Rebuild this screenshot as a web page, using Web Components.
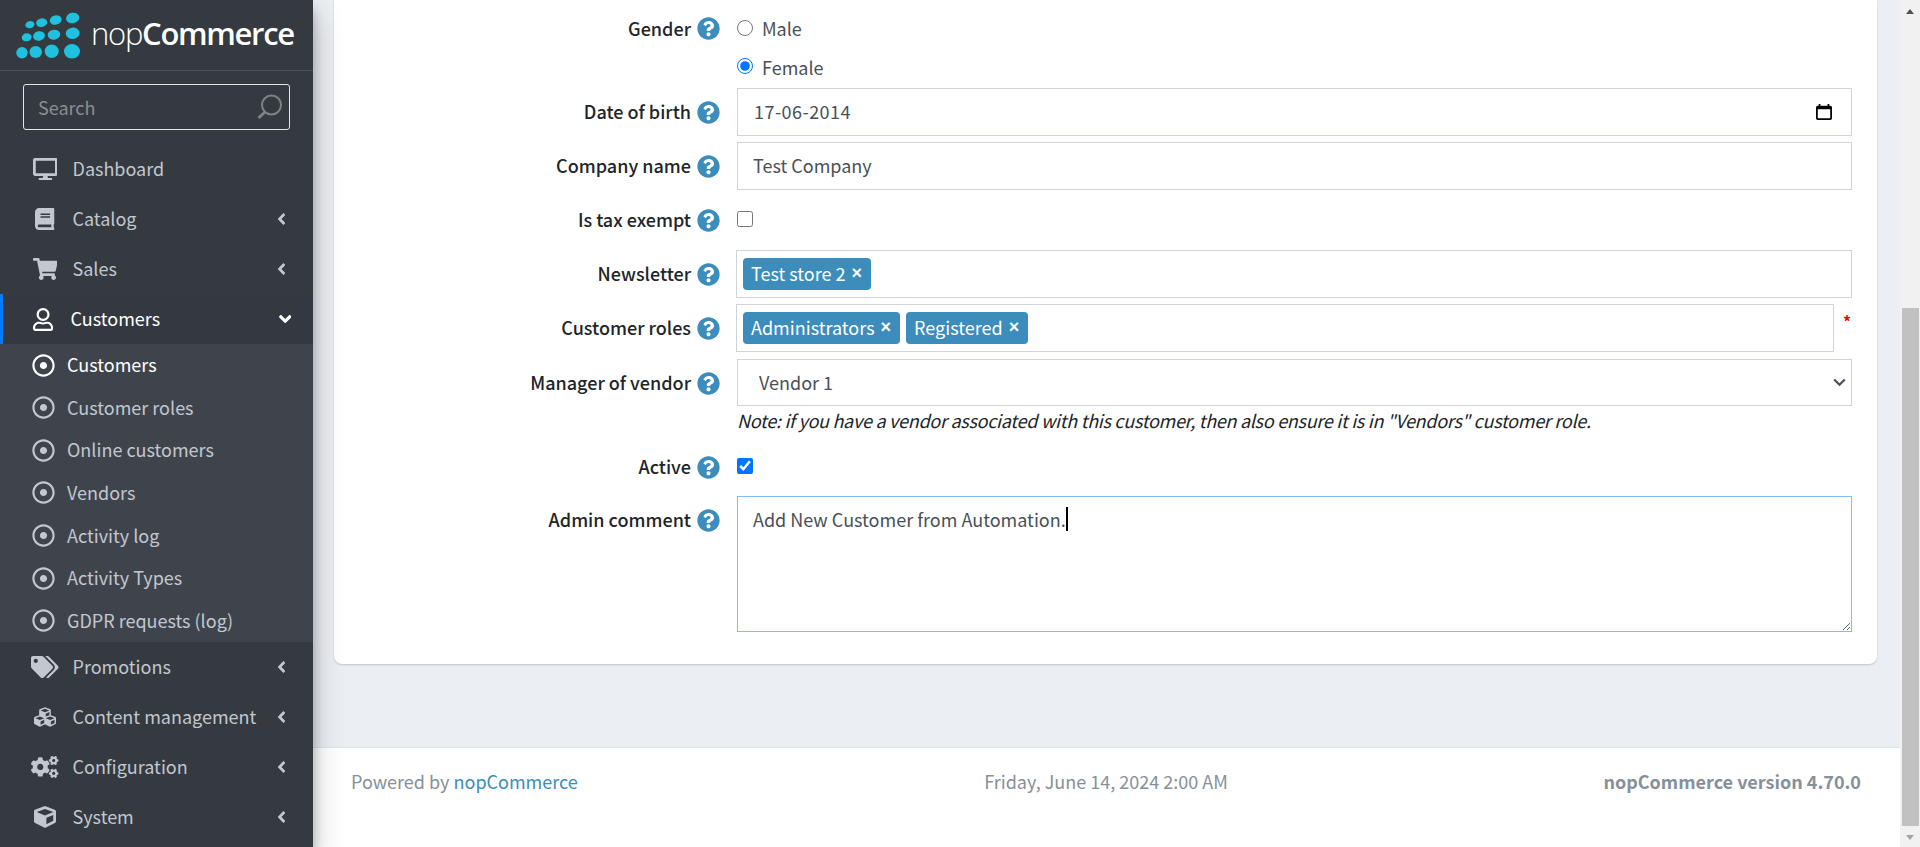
<!DOCTYPE html>
<html lang="en">
<head>
<meta charset="utf-8">
<title>nopCommerce</title>
<style>
  html, body { margin: 0; height: 100%; overflow: hidden; }
  body { font-family: "Noto Sans CJK SC", "Noto Sans", sans-serif; }
</style>
</head>
<body>
<nop-app>
  <nop-sidebar slot="side">
    <nop-menu-item icon="desktop">Dashboard</nop-menu-item>
    <nop-menu-item icon="book" arrow>Catalog</nop-menu-item>
    <nop-menu-item icon="cart" arrow>Sales</nop-menu-item>
    <nop-menu-item icon="user" open>Customers</nop-menu-item>
    <nop-submenu>
      <nop-subitem active>Customers</nop-subitem>
      <nop-subitem>Customer roles</nop-subitem>
      <nop-subitem>Online customers</nop-subitem>
      <nop-subitem>Vendors</nop-subitem>
      <nop-subitem>Activity log</nop-subitem>
      <nop-subitem>Activity Types</nop-subitem>
      <nop-subitem>GDPR requests (log)</nop-subitem>
    </nop-submenu>
    <nop-menu-item icon="tags" arrow>Promotions</nop-menu-item>
    <nop-menu-item icon="cubes" arrow>Content management</nop-menu-item>
    <nop-menu-item icon="cogs" arrow>Configuration</nop-menu-item>
    <nop-menu-item icon="cube" arrow>System</nop-menu-item>
  </nop-sidebar>

  <nop-card>
    <nop-row label="Gender" style="--label-h:39px;--gap:1px">
      <nop-choice type="radio" name="gender">Male</nop-choice>
      <nop-choice type="radio" name="gender" checked style="--nudge:-2px">Female</nop-choice>
    </nop-row>
    <nop-row label="Date of birth"><nop-field calendar style="--track:.45px">17-06-2014</nop-field></nop-row>
    <nop-row label="Company name"><nop-field style="--pad:15px">Test Company</nop-field></nop-row>
    <nop-row label="Is tax exempt"><nop-choice type="checkbox" style="--h:48px"></nop-choice></nop-row>
    <nop-row label="Newsletter">
      <nop-tags><nop-tag>Test store 2</nop-tag></nop-tags>
    </nop-row>
    <nop-row label="Customer roles" style="--gap:7px">
      <nop-tags required><nop-tag>Administrators</nop-tag><nop-tag>Registered</nop-tag></nop-tags>
    </nop-row>
    <nop-row label="Manager of vendor">
      <nop-field select style="--field-h:47px;--pad:21px">Vendor 1</nop-field>
      <nop-note>Note: if you have a vendor associated with this customer, then also ensure it is in "Vendors" customer role.</nop-note>
    </nop-row>
    <nop-row label="Active" style="--label-h:46px"><nop-choice type="checkbox" checked style="--h:46px"></nop-choice></nop-row>
    <nop-row label="Admin comment" style="--gap:0px"><nop-textarea>Add New Customer from Automation.</nop-textarea></nop-row>
  </nop-card>

  <nop-footer slot="footer"></nop-footer>
  <nop-scrollbar slot="bar"></nop-scrollbar>
</nop-app>

<script>
const ICONS = {
  desktop: ['0 0 576 512', 'M528 0H48C21.5 0 0 21.5 0 48v320c0 26.5 21.5 48 48 48h192l-16 48h-72c-13.3 0-24 10.7-24 24s10.7 24 24 24h272c13.3 0 24-10.7 24-24s-10.7-24-24-24h-72l-16-48h192c26.5 0 48-21.5 48-48V48c0-26.5-21.5-48-48-48zm-16 352H64V64h448v288z'],
  book: ['0 0 448 512', 'M448 360V24c0-13.3-10.7-24-24-24H96C43 0 0 43 0 96v320c0 53 43 96 96 96h328c13.3 0 24-10.7 24-24v-16c0-7.5-3.5-14.3-8.9-18.7-4.2-15.4-4.2-59.3 0-74.7 5.4-4.3 8.9-11.1 8.9-18.6zM128 134c0-3.3 2.7-6 6-6h212c3.3 0 6 2.7 6 6v20c0 3.3-2.7 6-6 6H134c-3.3 0-6-2.7-6-6v-20zm0 64c0-3.3 2.7-6 6-6h212c3.3 0 6 2.7 6 6v20c0 3.3-2.7 6-6 6H134c-3.3 0-6-2.7-6-6v-20zm253.4 250H96c-17.7 0-32-14.3-32-32 0-17.6 14.4-32 32-32h285.4c-1.9 17.1-1.9 46.9 0 64z'],
  cart: ['0 0 576 512', 'M528.12 301.319l47.273-208C578.806 78.301 567.391 64 551.99 64H159.208l-9.166-44.81C147.758 8.021 137.93 0 126.529 0H24C10.745 0 0 10.745 0 24v16c0 13.255 10.745 24 24 24h69.883l70.248 343.435C147.325 417.1 136 435.222 136 456c0 30.928 25.072 56 56 56s56-25.072 56-56c0-15.674-6.447-29.835-16.824-40h209.647C430.447 426.165 424 440.326 424 456c0 30.928 25.072 56 56 56s56-25.072 56-56c0-22.172-12.888-41.332-31.579-50.405l5.517-24.276c3.413-15.018-8.002-29.319-23.403-29.319H218.117l-6.545-32h293.145c11.206 0 20.92-7.754 23.403-18.681z'],
  user: ['0 0 448 512', 'M313.6 304c-28.7 0-42.5 16-89.6 16-47.1 0-60.8-16-89.6-16C60.2 304 0 364.2 0 438.4V464c0 26.5 21.5 48 48 48h352c26.5 0 48-21.5 48-48v-25.6c0-74.2-60.2-134.4-134.4-134.4zM400 464H48v-25.6c0-47.6 38.8-86.4 86.4-86.4 14.6 0 38.3 16 89.6 16 51.7 0 74.9-16 89.6-16 47.6 0 86.4 38.8 86.4 86.4V464zM224 288c79.5 0 144-64.5 144-144S303.5 0 224 0 80 64.5 80 144s64.5 144 144 144zm0-240c52.9 0 96 43.1 96 96s-43.1 96-96 96-96-43.1-96-96 43.1-96 96-96z'],
  tags: ['0 0 640 512', 'M497.941 225.941L286.059 14.059A48 48 0 0 0 252.118 0H48C21.49 0 0 21.49 0 48v204.118a48 48 0 0 0 14.059 33.941l211.882 211.882c18.744 18.745 49.136 18.746 67.882 0l204.118-204.118c18.745-18.745 18.745-49.137 0-67.882zM112 160c-26.51 0-48-21.49-48-48s21.49-48 48-48 48 21.49 48 48-21.49 48-48 48zm513.941 133.823L421.823 497.941c-18.745 18.745-49.137 18.745-67.882 0l-.36-.36L527.64 323.522c16.999-16.999 26.36-39.6 26.36-63.64s-9.362-46.641-26.36-63.64L331.397 0h48.721a48 48 0 0 1 33.941 14.059l211.882 211.882c18.745 18.745 18.745 49.137 0 67.882z'],
  cubes: ['0 0 512 512', 'M488.6 250.2L392 214V105.5c0-15-9.3-28.4-23.4-33.7l-100-37.5c-8.1-3.1-17.1-3.1-25.3 0l-100 37.5c-14.1 5.3-23.4 18.7-23.4 33.7V214l-96.6 36.2C9.3 255.5 0 268.9 0 283.9V394c0 13.6 7.7 26.1 19.9 32.2l100 50c10.1 5.1 22.1 5.1 32.2 0l103.9-52 103.9 52c10.1 5.1 22.1 5.1 32.2 0l100-50c12.2-6.1 19.9-18.6 19.9-32.2V283.9c0-15-9.3-28.4-23.4-33.7zM358 214.8l-85 31.9v-68.2l85-37v73.3zM154 104.1l102-38.2 102 38.2v.6l-102 41.4-102-41.4v-.6zm84 291.1l-85 42.5v-79.1l85-38.8v75.4zm0-112l-102 41.4-102-41.4v-.6l102-38.2 102 38.2v.6zm240 112l-85 42.5v-79.1l85-38.8v75.4zm0-112l-102 41.4-102-41.4v-.6l102-38.2 102 38.2v.6z'],
  cogs: ['0 0 640 512', 'M512.1 191l-8.2 14.3c-3 5.3-9.4 7.5-15.1 5.4-11.8-4.4-22.6-10.7-32.1-18.6-4.6-3.8-5.8-10.5-2.8-15.7l8.2-14.3c-6.9-8-12.3-17.3-15.9-27.4h-16.5c-6 0-11.2-4.3-12.2-10.3-2-12-2.1-24.6 0-37.1 1-6 6.2-10.4 12.2-10.4h16.5c3.6-10.1 9-19.4 15.9-27.4l-8.2-14.3c-3-5.2-1.9-11.9 2.8-15.7 9.5-7.9 20.4-14.2 32.1-18.6 5.7-2.1 12.1.1 15.1 5.4l8.2 14.3c10.5-1.9 21.2-1.9 31.7 0L552 6.3c3-5.3 9.4-7.5 15.1-5.4 11.8 4.4 22.6 10.7 32.1 18.6 4.6 3.8 5.8 10.5 2.8 15.7l-8.2 14.3c6.9 8 12.3 17.3 15.9 27.4h16.5c6 0 11.2 4.3 12.2 10.3 2 12 2.1 24.6 0 37.1-1 6-6.2 10.4-12.2 10.4h-16.5c-3.6 10.1-9 19.4-15.9 27.4l8.2 14.3c3 5.2 1.9 11.9-2.8 15.7-9.5 7.9-20.4 14.2-32.1 18.6-5.7 2.1-12.1-.1-15.1-5.4l-8.2-14.3c-10.4 1.9-21.2 1.9-31.7 0zm-10.5-58.8c38.5 29.6 82.4-14.3 52.8-52.8-38.5-29.7-82.4 14.3-52.8 52.8zM386.3 286.1l33.7 16.8c10.1 5.8 14.5 18.1 10.5 29.1-8.9 24.2-26.4 46.4-42.6 65.8-7.4 8.9-20.2 11.1-30.3 5.3l-29.1-16.8c-16 13.7-34.6 24.6-54.9 31.7v33.6c0 11.6-8.3 21.6-19.7 23.6-24.6 4.2-50.4 4.4-75.9 0-11.5-2-20-11.9-20-23.6V418c-20.3-7.2-38.9-18-54.9-31.7L74 403c-10 5.8-22.9 3.6-30.3-5.3-16.2-19.4-33.3-41.6-42.2-65.7-4-10.9.4-23.2 10.5-29.1l33.3-16.8c-3.9-20.9-3.9-42.4 0-63.4L12 205.8c-10.1-5.8-14.6-18.1-10.5-29 8.9-24.2 26-46.4 42.2-65.8 7.4-8.9 20.2-11.1 30.3-5.3l29.1 16.8c16-13.7 34.6-24.6 54.9-31.7V57.1c0-11.5 8.2-21.5 19.6-23.5 24.6-4.2 50.5-4.4 76-.1 11.5 2 20 11.9 20 23.6v33.6c20.3 7.2 38.9 18 54.9 31.7l29.1-16.8c10-5.8 22.9-3.6 30.3 5.3 16.2 19.4 33.2 41.6 42.1 65.8 4 10.9.1 23.2-10 29.1l-33.7 16.8c3.9 21 3.9 42.5 0 63.5zm-117.6 21.1c59.2-77-28.7-164.9-105.7-105.7-59.2 77 28.7 164.9 105.7 105.7zm243.4 182.7l-8.2 14.3c-3 5.3-9.4 7.5-15.1 5.4-11.8-4.4-22.6-10.7-32.1-18.6-4.6-3.8-5.8-10.5-2.8-15.7l8.2-14.3c-6.9-8-12.3-17.3-15.9-27.4h-16.5c-6 0-11.2-4.3-12.2-10.3-2-12-2.1-24.6 0-37.1 1-6 6.2-10.4 12.2-10.4h16.5c3.6-10.1 9-19.4 15.9-27.4l-8.2-14.3c-3-5.2-1.9-11.9 2.8-15.7 9.5-7.9 20.4-14.2 32.1-18.6 5.7-2.1 12.1.1 15.1 5.4l8.2 14.3c10.5-1.9 21.2-1.9 31.7 0l8.2-14.3c3-5.3 9.4-7.5 15.1-5.4 11.8 4.4 22.6 10.7 32.1 18.6 4.6 3.8 5.8 10.5 2.8 15.7l-8.2 14.3c6.9 8 12.3 17.3 15.9 27.4h16.5c6 0 11.2 4.3 12.2 10.3 2 12 2.1 24.6 0 37.1-1 6-6.2 10.4-12.2 10.4h-16.5c-3.6 10.1-9 19.4-15.9 27.4l8.2 14.3c3 5.2 1.9 11.9-2.8 15.7-9.5 7.9-20.4 14.2-32.1 18.6-5.7 2.1-12.1-.1-15.1-5.4l-8.2-14.3c-10.4 1.9-21.2 1.9-31.7 0zM501.6 431c38.5 29.6 82.4-14.3 52.8-52.8-38.5-29.6-82.4 14.3-52.8 52.8z'],
  cube: ['0 0 512 512', 'M239.1 6.3l-208 78c-18.7 7-31.1 25-31.1 45v225.1c0 18.2 10.3 34.8 26.5 42.9l208 104c13.5 6.8 29.4 6.8 42.9 0l208-104c16.3-8.1 26.5-24.8 26.5-42.9V129.3c0-20-12.4-37.9-31.1-44.9l-208-78C262 2.2 250 2.2 239.1 6.3zM256 68.4l192 72v1.1l-192 78-192-78v-1.1l192-72zm32 356V275.5l160-65v133.9l-160 80z'],
  help: ['0 0 512 512', 'M504 256c0 136.997-111.043 248-248 248S8 392.997 8 256C8 119.083 119.043 8 256 8s248 111.083 248 248zM262.655 90c-54.497 0-89.255 22.957-116.549 63.758-3.536 5.286-2.353 12.415 2.715 16.258l34.699 26.31c5.205 3.947 12.621 3.008 16.665-2.122 17.864-22.658 30.113-35.797 57.303-35.797 20.429 0 45.698 13.148 45.698 32.958 0 14.976-12.363 22.667-32.534 33.976C247.128 238.528 216 254.941 216 296v4c0 6.627 5.373 12 12 12h56c6.627 0 12-5.373 12-12v-1.333c0-28.462 83.186-29.647 83.186-106.667 0-58.002-60.165-102-116.531-102zM256 338c-25.365 0-46 20.635-46 46 0 25.364 20.635 46 46 46s46-20.636 46-46c0-25.365-20.635-46-46-46z'],
  dot: ['0 0 512 512', 'M256 56c110.532 0 200 89.451 200 200 0 110.532-89.451 200-200 200-110.532 0-200-89.451-200-200 0-110.532 89.451-200 200-200m0-48C119.033 8 8 119.033 8 256s111.033 248 248 248 248-111.033 248-248S392.967 8 256 8zm0 168c-44.183 0-80 35.817-80 80s35.817 80 80 80 80-35.817 80-80-35.817-80-80-80z'],
  left: ['0 0 256 512', 'M31.7 239l136-136c9.4-9.4 24.6-9.4 33.9 0l22.6 22.6c9.4 9.4 9.4 24.6 0 33.9L127.9 256l96.4 96.4c9.4 9.4 9.4 24.6 0 33.9L201.7 409c-9.4 9.4-24.6 9.4-33.9 0l-136-136c-9.5-9.4-9.5-24.6-.1-34z'],
  down: ['0 0 320 512', 'M143 352.3L7 216.3c-9.4-9.4-9.4-24.6 0-33.9l22.6-22.6c9.4-9.4 24.6-9.4 33.9 0l96.4 96.4 96.4-96.4c9.4-9.4 24.6-9.4 33.9 0l22.6 22.6c9.4 9.4 9.4 24.6 0 33.9l-136 136c-9.2 9.4-24.4 9.4-33.8 0z']
};
const icon = (name, h) => `<svg viewBox="${ICONS[name][0]}" height="${h}" fill="currentColor"><path d="${ICONS[name][1]}"/></svg>`;

// small helper, every element is just a template in an open shadow root
const define = (tag, html) => {
  customElements.define(tag, class extends HTMLElement {
    constructor() {
      super();
      this.attachShadow({ mode: 'open' });
      this.shadowRoot.innerHTML = typeof html === 'function' ? html(this) : html;
    }
  });
};

define('nop-app', `
<style>
  :host { display: flex; width: 1920px; height: 847px; overflow: hidden; background: #ebeef3; }
  .side { display: block; flex: 0 0 313px; position: relative; z-index: 2; box-shadow: 0 14px 28px rgba(0,0,0,.25), 0 10px 10px rgba(0,0,0,.22); }
  main { flex: 1; display: flex; flex-direction: column; min-width: 0; }
  .content { flex: 1; padding: 0 23px 0 21px; }
</style>
<div class="side"><slot name="side"></slot></div>
<main>
  <div class="content"><slot></slot></div>
  <slot name="footer"></slot>
</main>
<slot name="bar"></slot>`);

define('nop-logo', `
<style>
  :host { display: flex; align-items: center; height: 70px; border-bottom: 1px solid #4b545c; }
  svg { flex: none; margin-left: 16px; }
  .t { margin-left: 9px; margin-top: -5px; color: #fff; font: 300 31px/40px "Open Sans", sans-serif; letter-spacing: -1.3px; white-space: nowrap; }
  b { font-weight: 600; }
</style>
<svg width="66" height="50" viewBox="16 10 66 50" fill="#1fc1de">
  <g transform="rotate(-12 30 25)"><ellipse cx="30" cy="24.7" rx="4.6" ry="3.6"/></g>
  <g transform="rotate(-12 41.7 22.7)"><ellipse cx="41.7" cy="22.7" rx="5.6" ry="4.3"/></g>
  <g transform="rotate(-12 55.7 20)"><ellipse cx="55.7" cy="20" rx="6" ry="4.7"/></g>
  <g transform="rotate(-10 72.7 18)"><ellipse cx="72.7" cy="18" rx="6.7" ry="5.3"/></g>
  <g transform="rotate(-10 26.7 37.3)"><ellipse cx="26.7" cy="37.3" rx="5" ry="4"/></g>
  <g transform="rotate(-10 39 36)"><ellipse cx="39" cy="36" rx="6" ry="4.7"/></g>
  <g transform="rotate(-8 54 34.7)"><ellipse cx="54" cy="34.7" rx="6.3" ry="5"/></g>
  <g transform="rotate(-6 72.7 33.3)"><ellipse cx="72.7" cy="33.3" rx="7" ry="5.7"/></g>
  <ellipse cx="22" cy="52.7" rx="5.7" ry="5.7"/>
  <ellipse cx="35.7" cy="52" rx="6.3" ry="6"/>
  <ellipse cx="51.7" cy="51.3" rx="7" ry="6.7"/>
  <ellipse cx="72" cy="51.3" rx="8" ry="7.3"/>
</svg>
<div class="t">nop<b>Commerce</b></div>`);

define('nop-search', `
<style>
  :host { display: flex; align-items: center; justify-content: space-between; box-sizing: border-box; height: 46px; margin: 13px 23px 14px; padding: 0 7px 0 14px; border: 1px solid #e3e5e8; border-radius: 3px; color: #8a8e93; font-size: 18px; }
  span { line-height: 24px; }
  svg { display: block; }
</style>
<span>Search</span>
<svg width="26" height="26" viewBox="0 0 26 26" fill="none" stroke="#7f8388"><circle cx="15.5" cy="11" r="9.5" stroke-width="2"/><path d="M9 18 L2.5 24" stroke-width="3"/></svg>`);

define('nop-sidebar', `
<style>
  :host { display: block; height: 847px; background: #343a40; color: #c2c7d0; overflow: hidden; }
</style>
<nop-logo></nop-logo>
<nop-search></nop-search>
<slot></slot>`);

define('nop-menu-item', el => {
  const open = el.hasAttribute('open');
  return `
<style>
  :host { display: flex; align-items: center; box-sizing: border-box; height: 50px; font-size: 18px; color: ${open ? '#fff' : '#c2c7d0'}; ${open ? 'border-left: 3px solid #007bff; background: #343840;' : ''} }
  .i { flex: none; width: 28px; margin-left: ${open ? '26px' : '31px'}; margin-right: 13.5px; display: flex; justify-content: center; }
  .i svg { display: block; }
  .l { flex: 1; line-height: 24px; padding-bottom: 2px; white-space: nowrap; }
  .a { flex: none; display: flex; margin-right: ${open ? '22px' : '27px'}; }
  .a svg { display: block; }
</style>
<span class="i">${icon(el.getAttribute('icon'), open ? 23 : 22)}</span>
<span class="l"><slot></slot></span>
<span class="a">${open ? icon('down', 20) : el.hasAttribute('arrow') ? icon('left', 18) : ''}</span>`;
});

define('nop-submenu', `
<style>
  :host { display: block; background: #3f444c; }
</style>
<slot></slot>`);

define('nop-subitem', el => `
<style>
  :host { display: flex; align-items: center; height: 42.57px; font-size: 18px; color: ${el.hasAttribute('active') ? '#fff' : '#c2c7d0'}; }
  svg { display: block; flex: none; margin: 0 12px 0 32px; }
  span { line-height: 24px; padding-bottom: 2px; white-space: nowrap; }
</style>
${icon('dot', 23)}
<span><slot></slot></span>`);

define('nop-card', `
<style>
  :host { display: flex; flex-direction: column; background: #fff; border-radius: 0 0 8px 8px; padding: 9px 25px 32px 0; box-shadow: 0 1px 2px rgba(0,0,0,.18); font-size: 18px; }
</style>
<slot></slot>`);

define('nop-help', `
<style>
  :host { display: block; color: #3c8dbc; height: 23px; }
  svg { display: block; }
</style>
${icon('help', 23)}`);

define('nop-row', el => `
<style>
  :host { display: grid; grid-template-columns: 386px 1fr; column-gap: 17px; margin-bottom: var(--gap, 6px); }
  .label { display: flex; justify-content: flex-end; align-items: center; gap: 6px; height: var(--label-h, 48px); color: #212529; font-weight: 500; line-height: 24px; }
  .label span { padding-bottom: 2px; }
  .field { min-width: 0; }
</style>
<div class="label"><span>${el.getAttribute('label')}</span><nop-help></nop-help></div>
<div class="field"><slot></slot></div>`);

define('nop-choice', el => `
<style>
  :host { display: flex; align-items: center; height: var(--h, 39px); color: #495057; }
  input { margin: 0 9px 0 0; width: 16px; height: 16px; flex: none; position: relative; top: var(--nudge, -1px); }
  span { line-height: 24px; padding-bottom: 2px; }
</style>
<input type="${el.getAttribute('type')}" ${el.getAttribute('name') ? `name="${el.getAttribute('name')}"` : ''} ${el.hasAttribute('checked') ? 'checked' : ''}>
<span><slot></slot></span>`);

define('nop-field', el => `
<style>
  :host { display: flex; align-items: center; justify-content: space-between; box-sizing: border-box; height: var(--field-h, 48px); padding: 0 19px 0 var(--pad, 16px); border: 1px solid #ced4da; background: #fff; color: #495057; }
  span { line-height: 24px; padding-bottom: 2px; letter-spacing: var(--track, 0); }
  svg { display: block; }
  .sel { margin-right: -14px; color: #495057; }
</style>
<span><slot></slot></span>
${el.hasAttribute('calendar') ? `<svg width="16" height="18" viewBox="0 0 18 20"><path d="M3 1h2v2h8V1h2v2h1a2 2 0 0 1 2 2v12a2 2 0 0 1-2 2H2a2 2 0 0 1-2-2V5a2 2 0 0 1 2-2h1zM2 7v10h14V7z" fill="#000"/></svg>` : ''}
${el.hasAttribute('select') ? `<svg class="sel" width="13" height="9" viewBox="0 0 13 9" fill="none" stroke="currentColor" stroke-width="2.2"><path d="M1.2 1.5 6.5 6.8 11.8 1.5"/></svg>` : ''}`);

define('nop-note', `
<style>
  :host { display: block; padding: 2px 0 6px; font-style: italic; line-height: 24px; color: #212529; font-size: 18px; letter-spacing: -.28px; }
</style>
<slot></slot>`);

define('nop-tags', el => `
<style>
  :host { display: flex; align-items: center; margin-left: -1px; }
  .box { flex: 1; display: flex; align-items: center; gap: 6px; box-sizing: border-box; height: 48px; padding: 0 6px; border: 1px solid #ced4da; background: #fff; }
  .req { flex: none; width: 18px; padding-left: 9px; box-sizing: border-box; color: #f00; font-weight: 700; font-size: 16px; line-height: 16px; margin-bottom: 14px; }
</style>
<div class="box"><slot></slot></div>
${el.hasAttribute('required') ? '<span class="req">*</span>' : ''}`);

define('nop-tag', `
<style>
  :host { display: flex; align-items: center; height: 32px; padding: 0 9px 0 8px; background: #3c8dbc; border-radius: 4px; color: #fff; white-space: nowrap; }
  span { line-height: 24px; padding-bottom: 2px; }
  b { margin-left: 6px; font: 700 18px/24px "Liberation Sans", sans-serif; padding-bottom: 2px; }
</style>
<span><slot></slot></span><b>×</b>`);

define('nop-textarea', `
<style>
  :host { display: block; box-sizing: border-box; height: 136px; padding: 10px 15px; border: 1px solid #80bdff; background: #fff; color: #495057; line-height: 24px; overflow: auto; resize: vertical; }
  i { display: inline-block; width: 2px; height: 24px; background: #000; vertical-align: top; }
</style>
<slot></slot><i></i>`);

define('nop-footer', `
<style>
  :host { display: grid; grid-template-columns: 1fr auto 1fr; box-sizing: border-box; height: 100px; padding: 21px 39px 0 38px; border-top: 1px solid #dee2e6; background: #fff; color: #869099; font-size: 18px; line-height: 24px; }
  a { color: #3c8dbc; text-decoration: none; }
  .r { text-align: right; font-weight: 700; }
</style>
<div>Powered by <a href="#">nopCommerce</a></div>
<div>Friday, June 14, 2024 2:00 AM</div>
<div class="r">nopCommerce version 4.70.0</div>`);

define('nop-scrollbar', `
<style>
  :host { display: flex; flex-direction: column; align-items: center; flex: 0 0 20px; height: 847px; background: #f1f1f1; }
  .btn { flex: none; width: 100%; display: flex; align-items: center; justify-content: center; }
  .up { height: 308px; align-items: flex-start; padding-top: 9px; box-sizing: border-box; }
  .thumb { flex: none; width: 17px; height: 518px; background: #c1c1c1; }
  .dn { flex: 1; padding-top: 1px; }
  .t1 { width: 0; height: 0; border: 4.5px solid transparent; border-top: 0; border-bottom: 5px solid #505050; }
  .t2 { width: 0; height: 0; border: 4.5px solid transparent; border-bottom: 0; border-top: 5px solid #a3a3a3; }
</style>
<div class="btn up"><div class="t1"></div></div>
<div class="thumb"></div>
<div class="btn dn"><div class="t2"></div></div>`);
</script>
</body>
</html>
